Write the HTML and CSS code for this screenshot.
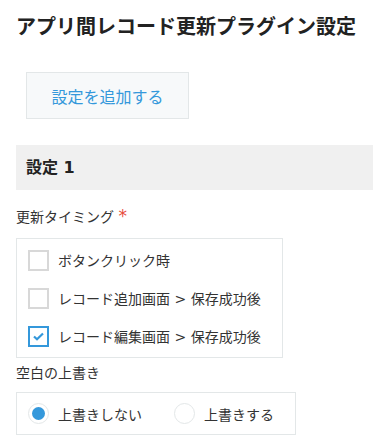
FILE: index.html
```html
<!DOCTYPE html>
<html lang="ja">
<head>
    <meta charset="UTF-8">
    <meta name="viewport" content="width=device-width, initial-scale=1.0">
    <title>アプリ間レコード更新プラグイン設定</title>
    <link rel="stylesheet" href="styles.css">
</head>
<body>

<div class="plugin-container">
    <h1>アプリ間レコード更新プラグイン設定</h1>

    <button class="add-btn" type="button">設定を追加する</button>

    <div class="setting">
        <h2 class="setting-header">設定 1</h2>

        <div class="field-label">更新タイミング <span class="required">*</span></div>
        <div class="checkbox-group">
            <label class="check-row">
                <span class="checkbox"></span>
                <span>ボタンクリック時</span>
            </label>
            <label class="check-row">
                <span class="checkbox"></span>
                <span>レコード追加画面 &gt; 保存成功後</span>
            </label>
            <label class="check-row">
                <span class="checkbox checked">
                    <svg width="11" height="9" viewBox="0 0 11 9"><path d="M1 4.5 L4 7.3 L10 1.5" fill="none" stroke="#3498db" stroke-width="2.2"/></svg>
                </span>
                <span>レコード編集画面 &gt; 保存成功後</span>
            </label>
        </div>

        <div class="field-label second">空白の上書き</div>
        <div class="radio-group">
            <label class="radio-row">
                <span class="radio selected"></span>
                <span>上書きしない</span>
            </label>
            <label class="radio-row">
                <span class="radio"></span>
                <span>上書きする</span>
            </label>
        </div>
    </div>
</div>

</body>
</html>
```

FILE: styles.css
```css
body {
    margin: 0;
    font-family: "DejaVu Sans", "Noto Sans CJK JP", sans-serif;
    color: #333;
    background: white;
}

.plugin-container {
    padding: 12px 0 0 16px;
}

h1 {
    margin: 0;
    font-size: 20px;
    line-height: 30px;
    font-weight: bold;
    color: #222;
}

.add-btn {
    display: block;
    margin: 30px 0 0 10px;
    width: 163px;
    height: 47px;
    background-color: #f7f9fa;
    border: 1px solid #e3e7e8;
    color: #3498db;
    font-family: inherit;
    font-size: 16px;
    cursor: pointer;
}

.add-btn:hover {
    background-color: #eef2f4;
}

.setting {
    margin-top: 26px;
}

.setting-header {
    margin: 0;
    height: 45px;
    line-height: 45px;
    padding-left: 10px;
    background-color: #f0f0f0;
    font-size: 16px;
    font-weight: bold;
    color: #222;
}

.field-label {
    margin-top: 17px;
    height: 20px;
    font-size: 14px;
    line-height: 20px;
    color: #333;
}

.field-label.second {
    margin-top: 5px;
}

.required {
    color: #e74c3c;
    font-size: 17px;
    line-height: 0;
}

.checkbox-group {
    margin-top: 11px;
    width: 267px;
    box-sizing: border-box;
    border: 1px solid #e3e7e8;
    padding: 2px 11px;
}

.check-row {
    display: flex;
    align-items: center;
    height: 38px;
    gap: 9px;
    font-size: 14px;
    cursor: pointer;
}

.checkbox {
    width: 21px;
    height: 21px;
    box-sizing: border-box;
    border: 2px solid #d8d8d8;
    display: flex;
    align-items: center;
    justify-content: center;
}

.checkbox.checked {
    border-color: #3498db;
}

.radio-group {
    margin-top: 9px;
    width: 280px;
    height: 43px;
    box-sizing: border-box;
    border: 1px solid #e3e7e8;
    padding: 0 11px;
    display: flex;
    align-items: center;
    gap: 32px;
}

.radio-row {
    display: flex;
    align-items: center;
    gap: 9px;
    font-size: 14px;
    cursor: pointer;
}

.radio {
    width: 21px;
    height: 21px;
    box-sizing: border-box;
    border: 1px solid #e3e7e8;
    border-radius: 50%;
    display: flex;
    align-items: center;
    justify-content: center;
}

.radio.selected::after {
    content: "";
    width: 13px;
    height: 13px;
    border-radius: 50%;
    background-color: #3498db;
}
```
